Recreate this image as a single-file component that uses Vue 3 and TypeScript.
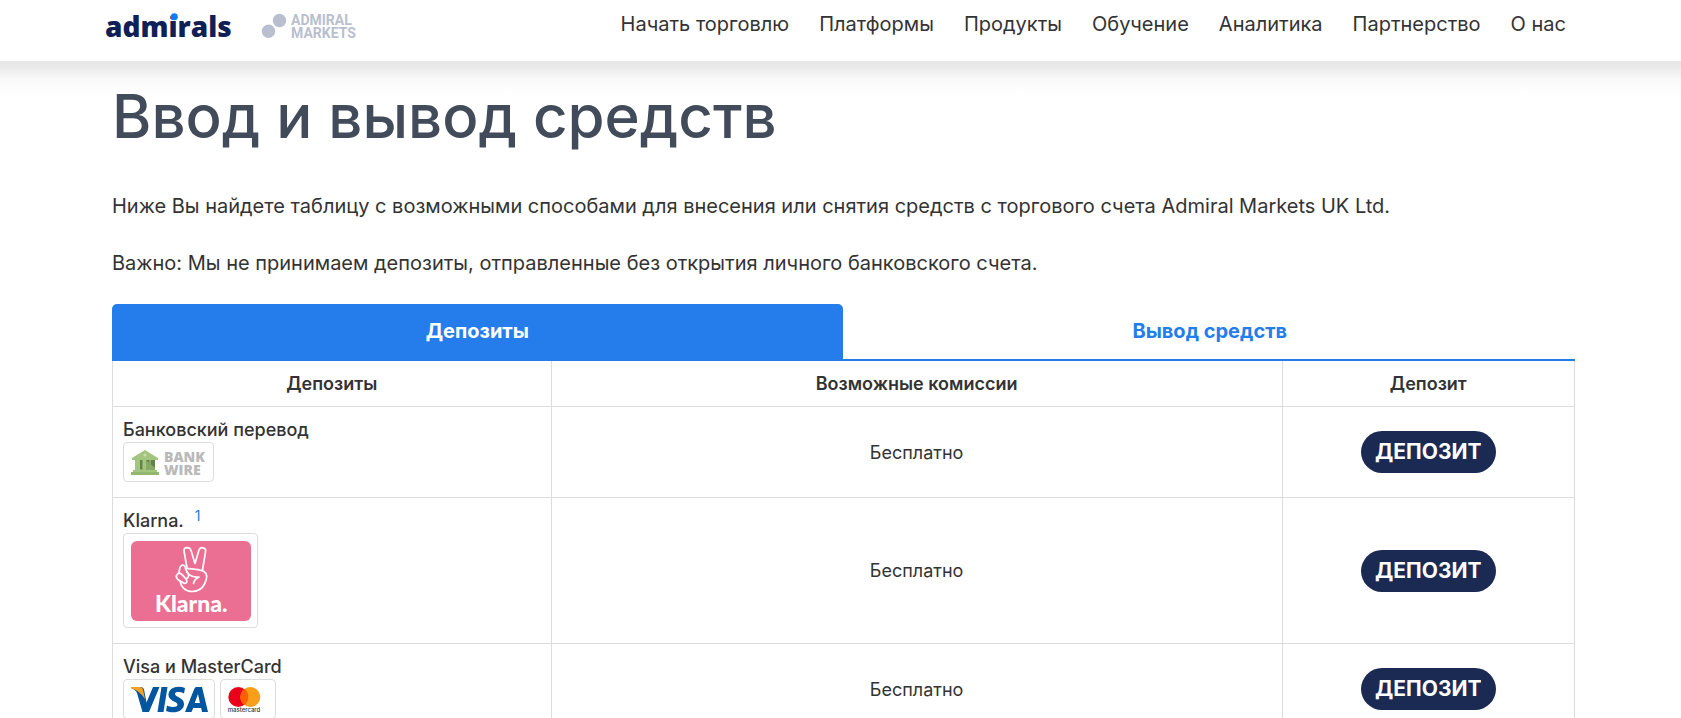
<script setup lang="ts">
import { ref } from 'vue'

interface Method {
  id: string
  name: string
  note?: string
  logos: string[]
  fee: string
}

const navItems: string[] = [
  'Начать торговлю',
  'Платформы',
  'Продукты',
  'Обучение',
  'Аналитика',
  'Партнерство',
  'О нас',
]

const tabs: string[] = ['Депозиты', 'Вывод средств']
const activeTab = ref(0)

const methods: Method[] = [
  { id: 'wire', name: 'Банковский перевод', logos: ['wire'], fee: 'Бесплатно' },
  { id: 'klarna', name: 'Klarna.', note: '1', logos: ['klarna'], fee: 'Бесплатно' },
  { id: 'cards', name: 'Visa и MasterCard', logos: ['visa', 'mastercard'], fee: 'Бесплатно' },
]
</script>

<template>
  <div class="page">
    <header class="header">
      <a class="brand" href="#" aria-label="Admirals">
        <svg class="brand-main" width="130" height="36" viewBox="0 0 130 36" aria-hidden="true">
          <text x="0" y="27" class="word">admirals</text>
          <circle cx="69.300" cy="6.800" r="3.500" fill="#0a7cff" />
        </svg>
        <svg class="brand-old" width="104" height="36" viewBox="0 0 104 36" aria-hidden="true">
          <circle cx="18.500" cy="10.500" r="6.700" fill="#b9bfcf" />
          <circle cx="7.500" cy="21.300" r="6.700" fill="#b9bfcf" />
          <text x="30" y="15" class="old">ADMIRAL</text>
          <text x="30" y="28" class="old">MARKETS</text>
        </svg>
      </a>
      <nav class="nav">
        <a v-for="item in navItems" :key="item" href="#">{{ item }}</a>
      </nav>
    </header>

    <main class="content">
      <h1>Ввод и вывод средств</h1>
      <p>Ниже Вы найдете таблицу с возможными способами для внесения или снятия средств с торгового счета Admiral Markets UK Ltd.</p>
      <p>Важно: Мы не принимаем депозиты, отправленные без открытия личного банковского счета.</p>

      <div class="tabs" role="tablist">
        <button
          v-for="(tab, i) in tabs"
          :key="tab"
          type="button"
          role="tab"
          :aria-selected="activeTab === i"
          :class="{ active: activeTab === i }"
          @click="activeTab = i"
        >{{ tab }}</button>
      </div>

      <table>
        <colgroup>
          <col class="c-method" />
          <col class="c-fee" />
          <col class="c-action" />
        </colgroup>
        <thead>
          <tr>
            <th scope="col">Депозиты</th>
            <th scope="col">Возможные комиссии</th>
            <th scope="col">Депозит</th>
          </tr>
        </thead>
        <tbody>
          <tr v-for="m in methods" :key="m.id">
            <td class="method">
              <div class="name">
                <span>{{ m.name }}</span>
                <a v-if="m.note" class="note" href="#">{{ m.note }}</a>
              </div>
              <div class="logos">
                <span v-for="logo in m.logos" :key="logo" class="badge">
                  <svg v-if="logo === 'wire'" width="76" height="25" viewBox="0 0 76 25" role="img" aria-label="Bank Wire">
                    <path d="M14 0 L27 8 V10 H1 V8 Z" fill="#a3c57d" />
                    <circle cx="14" cy="5" r="1.600" fill="#c8dfae" />
                    <rect x="4" y="10" width="20" height="10" fill="#86a963" />
                    <path d="M4 10h5v10H4zM12 10h3v10h-3z" fill="#a3c57d" />
                    <path d="M9 10h2v9H9zM15 10h9v8z" fill="#64814a" />
                    <path d="M18 10h2v10h-2z" fill="#86a963" />
                    <rect x="2" y="20" width="24" height="2" fill="#a3c57d" />
                    <rect x="0" y="22" width="28" height="3" fill="#93b76f" />
                    <text x="33" y="12" class="wire">BANK</text>
                    <text x="33" y="25" class="wire">WIRE</text>
                  </svg>
                  <svg v-else-if="logo === 'klarna'" width="120" height="80" viewBox="0 0 120 80" role="img" aria-label="Klarna">
                    <rect width="120" height="80" rx="6" fill="#eb6f93" />
                    <g fill="none" stroke="#fff" stroke-width="1.700" stroke-linecap="round" stroke-linejoin="round">
                      <path d="M56 27 L53 10 C52.500 5.500 59 5.500 60 9.500 L64 22.500 L68 9 C69.500 5 75.500 6.500 74.500 11 L71.500 29" />
                      <path d="M54.500 27.500 C62 28 68 28 73 30.500 C77 33 75.500 39 73.500 43 C71 48 66 50.500 61 50.500 C54 50.500 50 45.500 49 40" />
                      <path d="M49 40 C45 38 44.500 35 46.500 33 C49 30.500 52 34.500 55 38 C57.500 42 54 43.500 51 41 Z" />
                      <path d="M48 31.500 C48.500 28 48.500 24.500 51.500 24 C54.500 24 54.500 27 55 29 L57.500 33 C58 36 56.500 37.500 55 37.500" />
                      <path d="M56 31.500 C59 35 63.500 36.500 68 36 C64 38 63 39.500 62.500 42.500" />
                    </g>
                    <text x="24" y="71" class="klarna">Klarna.</text>
                  </svg>
                  <svg v-else-if="logo === 'visa'" width="77" height="25" viewBox="0 0 77 25" role="img" aria-label="Visa">
                    <g fill="#02559f">
                      <path d="M1 0h9q2.500 0 3 2.500L15.500 15.500 22 0h6.500L18 25h-6.500L6 6Q4 2 0 1z" />
                      <path d="M30.500 0h6L32.500 25h-6z" />
                      <path d="M54 1 53 6.500C49 4.500 44 4.500 44 7c0 3 9 3.500 9 10 0 8-10.500 10-18 7l1-5.500c4 2 10.500 2.300 10.500-1 0-3-9-3.500-9-9.500C37.500 0 47-2 54 1z" />
                      <path fill-rule="evenodd" d="M65 0h6l6 25h-6l-.800-4h-8l-1.700 4H54L63 2.500Q64 0 65 0zM67 7l-3.300 9h5.200z" />
                    </g>
                    <path d="M0 0h9q2.500 0 3 2.500L14 12Q9 4 0 1z" fill="#f6a21d" />
                  </svg>
                  <svg v-else width="41" height="25" viewBox="0 0 41 25" role="img" aria-label="Mastercard">
                    <circle cx="10.300" cy="10" r="10" fill="#eb001b" />
                    <circle cx="22.300" cy="10" r="10" fill="#f79e1b" />
                    <path d="M16.300 2a10 10 0 0 1 0 16a10 10 0 0 1 0-16z" fill="#ff5f00" />
                    <text x="16" y="25" class="mc">mastercard</text>
                  </svg>
                </span>
              </div>
            </td>
            <td class="fee">{{ m.fee }}</td>
            <td class="action"><button type="button">ДЕПОЗИТ</button></td>
          </tr>
        </tbody>
      </table>
    </main>
  </div>
</template>

<style>
body {
  margin: 0;
  background: #fff;
}
</style>

<style scoped>
.page {
  font-family: Inter, "Liberation Sans", sans-serif;
  color: #333;
}

.header {
  display: flex;
  align-items: flex-start;
  justify-content: space-between;
  box-sizing: border-box;
  height: 61px;
  padding: 10px 115px 0 105px;
  background: #fff;
}

.brand {
  display: flex;
  gap: 26px;
}

.brand svg,
.badge svg {
  display: block;
  overflow: visible;
}

.word {
  font: 800 28px "Open Sans", sans-serif;
  fill: #101f56;
}

.old {
  font: 700 14px Roboto, sans-serif;
  fill: #b9bfcf;
}

.nav {
  display: flex;
  gap: 30px;
}

.nav a {
  font-size: 20px;
  font-weight: 400;
  line-height: 28px;
  color: #333;
  text-decoration: none;
  white-space: nowrap;
}

.content {
  padding: 19px 106px 0 112px;
  background: linear-gradient(#e6e6e6, #eaeaea 6px, #f4f4f4 14px, #fbfbfb 22px, #fff 34px);
}

h1 {
  margin: 0 0 38px;
  font-size: 60px;
  font-weight: 500;
  line-height: 72px;
  color: #424b5a;
}

p {
  margin: 0 0 25px;
  font-size: 20px;
  font-weight: 400;
  line-height: 32px;
}

.tabs {
  display: flex;
  gap: 2px;
  border-bottom: 2px solid #247deb;
}

.tabs button {
  flex: 1;
  padding: 0;
  border: 0;
  border-radius: 5px 5px 0 0;
  background: transparent;
  font: 700 20px/55px Inter, sans-serif;
  color: #247deb;
}

.tabs button.active {
  background: #247deb;
  color: #fff;
}

table {
  width: 100%;
  table-layout: fixed;
  border-collapse: collapse;
}

.c-method {
  width: 30%;
}

.c-fee {
  width: 50%;
}

.c-action {
  width: 20%;
}

th,
td {
  border: 1px solid #ddd;
}

th {
  padding: 10px;
  border-top: 0;
  font-size: 18px;
  font-weight: 600;
  line-height: 25px;
}

td {
  padding: 10px 10px 15px;
  font-size: 18px;
}

.name {
  display: flex;
  gap: 11px;
  font-weight: 500;
  line-height: 25px;
}

.note {
  font-size: 14px;
  font-weight: 400;
  line-height: 16px;
  color: #247deb;
  text-decoration: none;
}

.logos {
  display: flex;
  gap: 5px;
}

.badge {
  display: flex;
  padding: 7px 6px 6px 7px;
  border: 1px solid #ddd;
  border-radius: 4px;
}

.wire {
  font: 800 14px "Open Sans", sans-serif;
  fill: #b9b9b9;
}

.klarna {
  font: 900 23px Lato, sans-serif;
  fill: #fff;
}

.mc {
  font: 500 6px Inter, sans-serif;
  text-anchor: middle;
  fill: #333;
}

td.fee,
td.action {
  padding: 10px;
  text-align: center;
}

.fee {
  font-weight: 400;
}

.action button {
  padding: 0 14px;
  border: 0;
  border-radius: 21px;
  background: #1b2a52;
  font: 700 21px/42px Inter, sans-serif;
  color: #fff;
}
</style>
